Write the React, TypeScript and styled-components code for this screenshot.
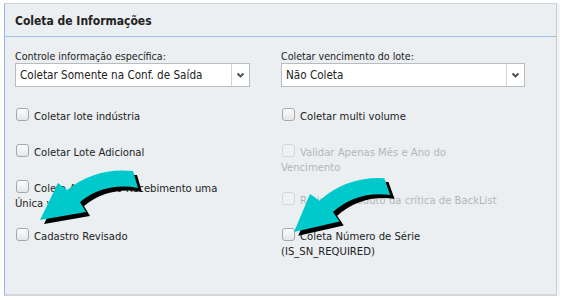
import React from 'react'
import styled, { createGlobalStyle } from 'styled-components'

const GlobalStyle = createGlobalStyle`
    html, body {
        margin: 0;
        padding: 0;
        background: #ffffff;
    }
    body {
        font-family: 'DejaVu Sans Condensed', 'DejaVu Sans', sans-serif;
        font-stretch: condensed;
        color: #222;
    }
`

const Page = styled.div`
    width: 562px;
    height: 301px;
    padding: 3px 0 0 4px;
    box-sizing: border-box;
`

const Panel = styled.div`
    position: relative;
    width: 553px;
    height: 293px;
    box-sizing: border-box;
    background: #ebeff1;
    border-top: 1px solid #d3d6d8;
    border-left: 1px solid #94b8ea;
    border-right: 1px solid #c9cccf;
    border-bottom: 2px solid #d3d6d8;
    box-shadow: 3px 0 0 #f3f4f5;
`

const Header = styled.div`
    height: 33px;
    display: flex;
    align-items: center;
    padding: 1px 0 0 10px;
    box-sizing: border-box;
    border-bottom: 1px solid #9cc0ee;
    font-size: 12px;
    font-weight: bold;
    color: #222;
`

const Body = styled.div`
    display: grid;
    grid-template-columns: 266px 260px;
    padding: 12px 0 0 10px;
`

const Column = styled.div`
    display: flex;
    flex-direction: column;
`

const Label = styled.div`
    font-size: 10.6px;
    line-height: 14px;
    color: #222;
`

const Select = styled.div<{ $width: number }>`
    width: ${(p) => p.$width}px;
    height: 24px;
    box-sizing: border-box;
    display: flex;
    background: #fff;
    border: 1px solid #b9bcbf;
    margin-bottom: 21px;
`

const SelectText = styled.div`
    flex: 1;
    display: flex;
    align-items: center;
    padding-left: 4px;
    font-size: 11.6px;
    color: #222;
`

const SelectButton = styled.div`
    width: 17px;
    border-left: 1px solid #d2d4d6;
    display: flex;
    align-items: center;
    justify-content: center;
`

const Option = styled.div<{ $lines: number; $disabled?: boolean }>`
    font-size: 11.2px;
    line-height: 15px;
    height: ${(p) => p.$lines * 15}px;
    margin-bottom: ${(p) => (p.$lines > 1 ? 18 : 21)}px;
    color: ${(p) => (p.$disabled ? '#b3b6b8' : '#222')};
`

const Box = styled.span<{ $disabled?: boolean }>`
    display: inline-block;
    width: 11px;
    height: 11px;
    margin: 0 5px -1px 1px;
    border: 1px solid ${(p) => (p.$disabled ? '#d5d7d9' : '#a6a9ab')};
    border-radius: 3px;
    background: ${(p) =>
        p.$disabled ? '#eef0f1' : 'linear-gradient(#fdfdfd, #e4e6e8)'};
`

const ArrowLayer = styled.svg`
    position: absolute;
    left: -5px;
    top: -4px;
    pointer-events: none;
`

function Chevron() {
    return (
        <svg width="9" height="6" viewBox="0 0 9 6">
            <path d="M1.5 1.5 L4.5 4.5 L7.5 1.5" fill="none" stroke="#4a4a4a" strokeWidth="1.8" />
        </svg>
    )
}

function CheckOption(props: { lines?: number; disabled?: boolean; children: React.ReactNode }) {
    return (
        <Option $lines={props.lines || 1} $disabled={props.disabled}>
            <Box $disabled={props.disabled} />
            {props.children}
        </Option>
    )
}

const arrowPath =
    'M0 49 L18 12 L27 19 Q56 -4 93 0 L98 17 Q65 11 40 31 L46 41 Z'

function CurvedArrow(props: { x: number; y: number; angle?: number }) {
    return (
        <g transform={`translate(${props.x} ${props.y}) rotate(${props.angle || 0} 0 49)`}>
            <path d={arrowPath} fill="#000" transform="translate(4 4)" />
            <path d={arrowPath} fill="#00c9cc" />
        </g>
    )
}

export default function App() {
    return (
        <Page>
            <GlobalStyle />
            <Panel>
                <Header>Coleta de Informações</Header>
                <Body>
                    <Column>
                        <Label>Controle informação específica:</Label>
                        <Select $width={235}>
                            <SelectText>Coletar Somente na Conf. de Saída</SelectText>
                            <SelectButton>
                                <Chevron />
                            </SelectButton>
                        </Select>
                        <CheckOption>Coletar lote indústria</CheckOption>
                        <CheckOption>Coletar Lote Adicional</CheckOption>
                        <CheckOption lines={2}>
                            Coleta Apenas no Recebimento uma
                            <br />
                            Única vez
                        </CheckOption>
                        <CheckOption>Cadastro Revisado</CheckOption>
                    </Column>
                    <Column>
                        <Label>Coletar vencimento do lote:</Label>
                        <Select $width={244}>
                            <SelectText>Não Coleta</SelectText>
                            <SelectButton>
                                <Chevron />
                            </SelectButton>
                        </Select>
                        <CheckOption>Coletar multi volume</CheckOption>
                        <CheckOption lines={2} disabled>
                            Validar Apenas Mês e Ano do
                            <br />
                            Vencimento
                        </CheckOption>
                        <CheckOption disabled>Retirar o produto da crítica de BackList</CheckOption>
                        <CheckOption lines={2}>
                            Coleta Número de Série
                            <br />
                            (IS_SN_REQUIRED)
                        </CheckOption>
                    </Column>
                </Body>
                <ArrowLayer width="562" height="301" viewBox="0 0 562 301">
                    <CurvedArrow x={40} y={171} />
                    <CurvedArrow x={294} y={183} angle={-3} />
                </ArrowLayer>
            </Panel>
        </Page>
    )
}
